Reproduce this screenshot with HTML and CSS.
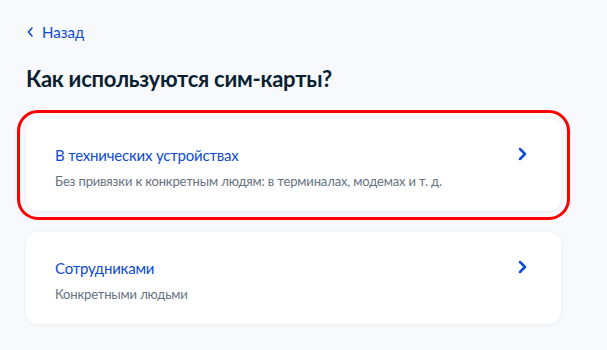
FILE: index.html
```html
<html>
<head>
    <meta charset="utf-8">
    <title>Сим-карты</title>
    <link rel="stylesheet" href="styles.css">
</head>
<body>
<div class="page">
    <a class="back" href="#">
        <svg class="back-icon" width="6" height="10" viewBox="0 0 6 10"><path d="M5 1L1.5 5L5 9" fill="none" stroke="currentColor" stroke-width="1.6" stroke-linecap="round" stroke-linejoin="round"/></svg>
        <span>Назад</span>
    </a>
    <h1 class="title">Как используются сим-карты?</h1>
    <div class="list">
        <a class="card selected" href="#">
            <div class="card-text">
                <div class="card-title">В технических устройствах</div>
                <div class="card-desc">Без привязки к конкретным людям: в терминалах, модемах и т. д.</div>
            </div>
            <svg class="arrow" width="9" height="14" viewBox="0 0 9 14"><path d="M2 2L7 7L2 12" fill="none" stroke="currentColor" stroke-width="2.5" stroke-linecap="round" stroke-linejoin="round"/></svg>
        </a>
        <a class="card" href="#">
            <div class="card-text">
                <div class="card-title">Сотрудниками</div>
                <div class="card-desc">Конкретными людьми</div>
            </div>
            <svg class="arrow" width="9" height="14" viewBox="0 0 9 14"><path d="M2 2L7 7L2 12" fill="none" stroke="currentColor" stroke-width="2.5" stroke-linecap="round" stroke-linejoin="round"/></svg>
        </a>
    </div>
</div>
</body>
</html>
```

FILE: styles.css
```css
body {
    margin: 0;
    background: #f7f9fc;
    font-family: Lato, "Noto Sans", sans-serif;
    --blueColor: #0d4cd3;
    --darkColor: #0b1f33;
    --grayColor: #66727f;
}

a {
    text-decoration: none;
}

.page {
    width: 535px;
    padding: 22px 0 0 26px;
}

.back {
    display: flex;
    align-items: center;
    gap: 9px;
    color: var(--blueColor);
    font-size: 15px;
    line-height: 20px;
    padding-left: 1px;
}

.title {
    margin: 22px 0 0;
    font-size: 22px;
    line-height: 30px;
    font-weight: 700;
    letter-spacing: -0.25px;
    color: var(--darkColor);
}

.list {
    display: flex;
    flex-direction: column;
    gap: 21px;
    margin-top: 25px;
}

.card {
    display: flex;
    align-items: flex-start;
    background: #fff;
    border-radius: 12px;
    box-shadow: 0 1px 4px rgba(11, 31, 51, 0.06);
    padding: 26px 34px 21px 29px;
}

.card.selected {
    outline: 3px solid #f00;
    outline-offset: 6px;
}

.card-text {
    flex: 1;
}

.card-title {
    font-size: 15px;
    line-height: 20px;
    letter-spacing: -0.2px;
    color: var(--blueColor);
}

.card-desc {
    margin-top: 7px;
    font-size: 13px;
    line-height: 18px;
    letter-spacing: -0.15px;
    color: var(--grayColor);
}

.arrow {
    color: var(--blueColor);
    margin-top: 2px;
}
```
